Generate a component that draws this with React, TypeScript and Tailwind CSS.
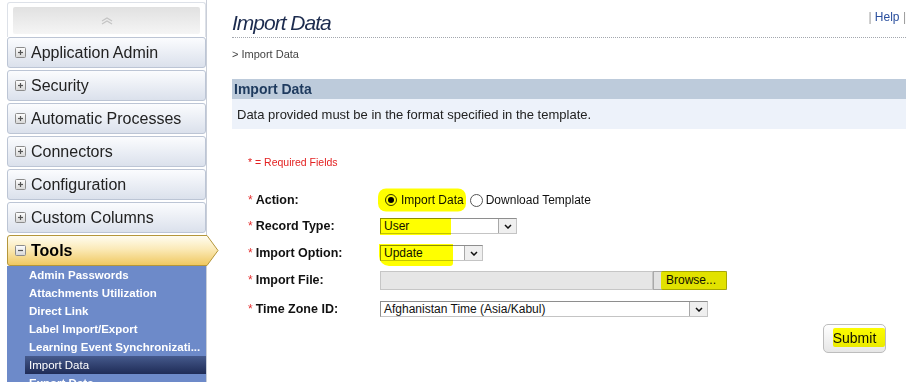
import React from "react";

const HL = "pointer-events-none absolute bg-[#ffff00] mix-blend-multiply";

function NodeIcon({ open }: { open?: boolean }) {
  return (
    <svg width="11" height="11" viewBox="0 0 11 11" className="shrink-0">
      <defs>
        <linearGradient id={open ? "ig2" : "ig1"} x1="0" y1="0" x2="0" y2="1">
          <stop offset="0" stopColor="#ffffff" />
          <stop offset="1" stopColor="#d6d6d6" />
        </linearGradient>
      </defs>
      <rect x="0.5" y="0.5" width="10" height="10" rx="1" fill={`url(#${open ? "ig2" : "ig1"})`} stroke="#8c8c8c" />
      <path d="M3 5.5 H8" stroke="#555" strokeWidth="1.2" />
      {!open && <path d="M5.5 3 V8" stroke="#555" strokeWidth="1.2" />}
    </svg>
  );
}

function Chevron() {
  return (
    <svg width="8" height="5" viewBox="0 0 8 5">
      <path d="M1 1 L4 4 L7 1" fill="none" stroke="#111" strokeWidth="1.5" />
    </svg>
  );
}

function Select({ width, value, children }: { width: string; value: string; children?: React.ReactNode }) {
  return (
    <div className={`relative flex h-[16px] ${width} border border-[#8e8e8e] border-b-[#c4c4c4] border-r-[#c4c4c4] bg-white`}>
      <span className="flex-1 pl-[3px] text-[12px] leading-[14px] text-[#111]">{value}</span>
      <span className="flex w-[18px] items-center justify-center border-l border-[#a8a8a8] bg-[#efefef]">
        <Chevron />
      </span>
      {children}
    </div>
  );
}

function Field({ label, height, children }: { label: string; height: string; children: React.ReactNode }) {
  return (
    <div className={`flex items-center ${height}`}>
      <div className="flex w-[132px] items-center gap-[3px]">
        <span className="text-[12px] text-[#e53030]">*</span>
        <span className="text-[12.5px] font-bold text-[#111]">{label}</span>
      </div>
      <div className="relative flex items-center">{children}</div>
    </div>
  );
}

const menu = ["Application Admin", "Security", "Automatic Processes", "Connectors", "Configuration", "Custom Columns"];
const tools = [
  "Admin Passwords",
  "Attachments Utilization",
  "Direct Link",
  "Label Import/Export",
  "Learning Event Synchronizati...",
];

export default function App() {
  return (
    <div className="flex h-[382px] w-[913px] overflow-hidden bg-white font-['Liberation_Sans',Arial,sans-serif]">
      {/* Sidebar */}
      <div className="w-[207px] shrink-0 pl-[7px]">
        <div className="flex h-full flex-col border-r border-[#c9ced8]">
          <div className="mt-[2px] h-[35px] shrink-0 rounded-t-[3px] border border-b-0 border-[#dde1e8] px-[5px] pt-[4px]">
            <div className="flex h-[27px] items-center justify-center rounded-[2px] bg-gradient-to-b from-[#e1e1e1] to-[#f5f5f5]">
              <svg width="12" height="8" viewBox="0 0 12 8">
                <path d="M1 4 L6 1 L11 4 M1 7 L6 4 L11 7" fill="none" stroke="#c4c4c4" strokeWidth="1.2" />
              </svg>
            </div>
          </div>
          {menu.map((m) => (
            <div
              key={m}
              className="mb-[2px] flex h-[31px] shrink-0 items-center gap-[5px] rounded-[3px] border border-[#bcc5d5] bg-gradient-to-b from-[#fbfcfe] to-[#dbe1ec] pl-[7px] text-[16px] text-[#222]"
            >
              <NodeIcon />
              {m}
            </div>
          ))}
          <div className="relative flex h-[31px] shrink-0 items-center gap-[5px] pl-[8px] text-[16px] font-bold text-black">
            <svg className="absolute left-0 top-0" width="212" height="31" viewBox="0 0 212 31">
              <defs>
                <linearGradient id="tg" x1="0" y1="0" x2="0" y2="1">
                  <stop offset="0" stopColor="#fffdf2" />
                  <stop offset="0.45" stopColor="#fbeab8" />
                  <stop offset="1" stopColor="#efc75e" />
                </linearGradient>
              </defs>
              <path d="M3 0.5 H200 L211 15.5 L200 30.5 H3 Q0.5 30.5 0.5 28 V3 Q0.5 0.5 3 0.5 Z" fill="url(#tg)" stroke="#b4963a" />
            </svg>
            <span className="relative flex items-center gap-[5px]">
              <NodeIcon open />
              Tools
            </span>
          </div>
          <div className="flex-1 bg-[#6d8ac9] text-[11.5px] leading-[18px] text-white">
            {tools.map((t) => (
              <div key={t} className="h-[18px] pl-[22px] font-bold">
                {t}
              </div>
            ))}
            <div className="ml-[18px] h-[18px] bg-gradient-to-b from-[#465a8c] to-[#1f2c57] pl-[4px]">Import Data</div>
            <div className="h-[18px] pl-[22px] font-bold">Export Data</div>
          </div>
        </div>
      </div>

      {/* Main */}
      <div className="flex-1 pl-[25px] pr-[7px]">
        <div className="flex h-[38px] items-start justify-between border-b border-dotted border-[#a3a7ae] pt-[10px]">
          <h1 className="text-[21px] italic leading-[26px] tracking-[-1px] text-[#1c2b4e]">Import Data</h1>
          <div className="text-[12px] leading-[14px] text-[#999]">
            | <span className="text-[#2a4f9e]">Help</span> |
          </div>
        </div>
        <div className="mt-[9px] text-[11px] leading-[14px] text-[#444]">&gt; Import Data</div>

        <div className="mt-[18px] h-[20px] bg-[#bdcbdb] pl-[2px] text-[14px] font-bold leading-[20px] text-[#1e3a5e]">
          Import Data
        </div>
        <div className="flex h-[30px] items-center bg-[#edf2fa] pl-[5px] pt-[2px] text-[13px] text-[#222]">
          Data provided must be in the format specified in the template.
        </div>

        <div className="pl-[16px]">
          <div className="mt-[26px] text-[10.5px] leading-[14px] text-[#e32222]">* = Required Fields</div>
          <div className="mt-[19px] flex flex-col">
            <Field label="Action:" height="h-[24px]">
              <span className="flex items-center pl-[5px] text-[12px] text-[#111]">
                <span className="flex h-[12px] w-[12px] items-center justify-center rounded-full border border-[#333] bg-white">
                  <span className="h-[6px] w-[6px] rounded-full bg-black" />
                </span>
                <span className="ml-[4px]">Import Data</span>
                <span className="ml-[6px] h-[13px] w-[13px] rounded-full border border-[#555] bg-white" />
                <span className="ml-[3px]">Download Template</span>
              </span>
              <span className={`${HL} -left-[2px] top-1/2 h-[23px] w-[88px] -translate-y-1/2 rounded-[8px]`} />
            </Field>
            <Field label="Record Type:" height="h-[28px]">
              <Select width="w-[137px]" value="User">
                <span className={`${HL} -left-[1px] -top-[1px] h-[17px] w-[71px]`} />
              </Select>
            </Field>
            <Field label="Import Option:" height="h-[26px]">
              <Select width="w-[103px]" value="Update">
                <span className={`${HL} -left-[2px] -top-[2px] h-[22px] w-[74px] rounded-bl-[10px] rounded-br-[3px]`} />
              </Select>
            </Field>
            <Field label="Import File:" height="h-[28px]">
              <div className="h-[19px] w-[273px] border border-[#c6c6c6] bg-[#e6e6e6]" />
              <div className="relative h-[19px] w-[74px] border border-[#a9a9a9] bg-[#e2e2e2] pl-[12px] text-[12px] leading-[17px] text-[#111]">
                Browse...
                <span className={`${HL} left-[7px] -top-[1px] h-[19px] w-[66px] rounded-[2px]`} />
              </div>
            </Field>
            <Field label="Time Zone ID:" height="h-[30px]">
              <Select width="w-[328px]" value="Afghanistan Time (Asia/Kabul)" />
            </Field>
          </div>
          <div className="flex justify-end pr-[20px]">
            <button className="relative h-[29px] w-[63px] rounded-[5px] border border-[#bdbdbd] bg-gradient-to-b from-[#ffffff] to-[#e6e6e6] text-[14px] text-[#111]">
              Submit
              <span className={`${HL} left-[9px] top-[3px] h-[19px] w-[52px] rounded-[2px]`} />
            </button>
          </div>
        </div>
      </div>
    </div>
  );
}
